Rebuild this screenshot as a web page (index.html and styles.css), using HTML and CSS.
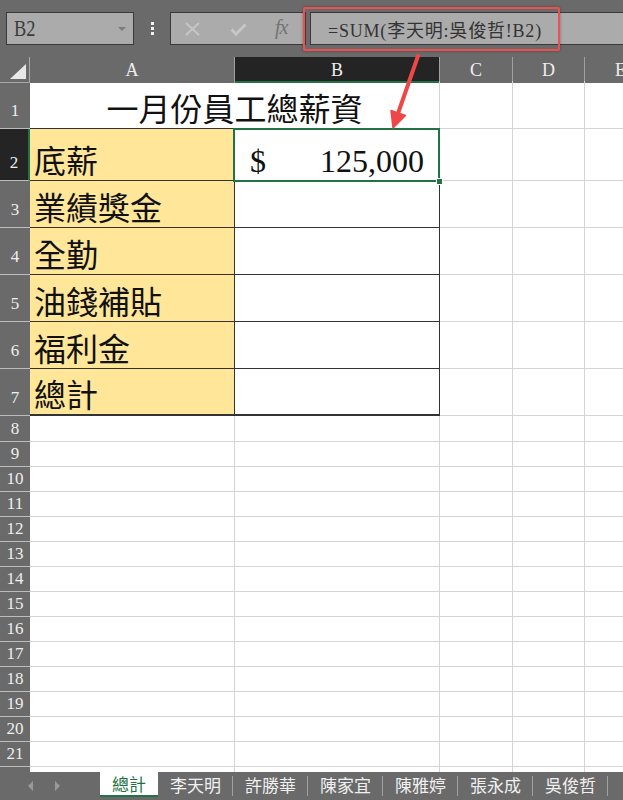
FILE: index.html
```html
<!DOCTYPE html>
<html lang="zh-Hant">
<head>
<meta charset="utf-8">
<title>一月份員工總薪資</title>
<link rel="stylesheet" href="styles.css">
</head>
<body>
<div class="app">
  <div class="toolbar">
    <div class="namebox"><span class="nb-text">B2</span><span class="nb-caret"></span></div>
    <div class="dots"><i></i><i></i><i></i></div>
    <div class="fbtns">
      <svg class="ic-x" width="15" height="14" viewBox="0 0 15 14"><path d="M1 1 L14 13 M14 1 L1 13" stroke="#c6c6c6" stroke-width="2" fill="none"/></svg>
      <svg class="ic-ok" width="17" height="13" viewBox="0 0 17 13"><path d="M1.5 6.5 L6 11 L15.5 1.5" stroke="#c6c6c6" stroke-width="3" fill="none"/></svg>
      <span class="fx">fx</span>
    </div>
    <div class="finput">=SUM(李天明:吳俊哲!B2)</div>
  </div>

  <div class="sheet">
    <div class="row hdr">
      <div class="corner"><span class="tri"></span></div>
      <div class="ch">A</div>
      <div class="ch sel">B</div>
      <div class="ch">C</div>
      <div class="ch">D</div>
      <div class="ch">E</div>
    </div>
    <div class="row r48">
      <div class="rh big">1</div>
      <div class="c title"><span>一月份員工總薪資</span></div>
      <div class="c"></div><div class="c"></div><div class="c"></div>
    </div>
    <div class="row r52">
      <div class="rh big sel">2</div>
      <div class="c lab"><span>底薪</span></div>
      <div class="c tb active"><span class="cur">$</span><span class="num">125,000</span><i class="handle"></i></div>
      <div class="c"></div><div class="c"></div><div class="c"></div>
    </div>
    <div class="row r47">
      <div class="rh big">3</div>
      <div class="c lab"><span>業績獎金</span></div>
      <div class="c tb"></div>
      <div class="c"></div><div class="c"></div><div class="c"></div>
    </div>
    <div class="row r47">
      <div class="rh big">4</div>
      <div class="c lab"><span>全勤</span></div>
      <div class="c tb"></div>
      <div class="c"></div><div class="c"></div><div class="c"></div>
    </div>
    <div class="row r47">
      <div class="rh big">5</div>
      <div class="c lab"><span>油錢補貼</span></div>
      <div class="c tb"></div>
      <div class="c"></div><div class="c"></div><div class="c"></div>
    </div>
    <div class="row r47">
      <div class="rh big">6</div>
      <div class="c lab"><span>福利金</span></div>
      <div class="c tb"></div>
      <div class="c"></div><div class="c"></div><div class="c"></div>
    </div>
    <div class="row r47">
      <div class="rh big">7</div>
      <div class="c lab last"><span>總計</span></div>
      <div class="c tb last"></div>
      <div class="c"></div><div class="c"></div><div class="c"></div>
    </div>
    <div class="row r26"><div class="rh">8</div><div class="c"></div><div class="c"></div><div class="c"></div><div class="c"></div><div class="c"></div></div>
    <div class="row r25"><div class="rh">9</div><div class="c"></div><div class="c"></div><div class="c"></div><div class="c"></div><div class="c"></div></div>
    <div class="row r25"><div class="rh">10</div><div class="c"></div><div class="c"></div><div class="c"></div><div class="c"></div><div class="c"></div></div>
    <div class="row r25"><div class="rh">11</div><div class="c"></div><div class="c"></div><div class="c"></div><div class="c"></div><div class="c"></div></div>
    <div class="row r25"><div class="rh">12</div><div class="c"></div><div class="c"></div><div class="c"></div><div class="c"></div><div class="c"></div></div>
    <div class="row r25"><div class="rh">13</div><div class="c"></div><div class="c"></div><div class="c"></div><div class="c"></div><div class="c"></div></div>
    <div class="row r25"><div class="rh">14</div><div class="c"></div><div class="c"></div><div class="c"></div><div class="c"></div><div class="c"></div></div>
    <div class="row r25"><div class="rh">15</div><div class="c"></div><div class="c"></div><div class="c"></div><div class="c"></div><div class="c"></div></div>
    <div class="row r25"><div class="rh">16</div><div class="c"></div><div class="c"></div><div class="c"></div><div class="c"></div><div class="c"></div></div>
    <div class="row r25"><div class="rh">17</div><div class="c"></div><div class="c"></div><div class="c"></div><div class="c"></div><div class="c"></div></div>
    <div class="row r25"><div class="rh">18</div><div class="c"></div><div class="c"></div><div class="c"></div><div class="c"></div><div class="c"></div></div>
    <div class="row r25"><div class="rh">19</div><div class="c"></div><div class="c"></div><div class="c"></div><div class="c"></div><div class="c"></div></div>
    <div class="row r25"><div class="rh">20</div><div class="c"></div><div class="c"></div><div class="c"></div><div class="c"></div><div class="c"></div></div>
    <div class="row r25"><div class="rh">21</div><div class="c"></div><div class="c"></div><div class="c"></div><div class="c"></div><div class="c"></div></div>
    <div class="row r25"><div class="rh"></div><div class="c"></div><div class="c"></div><div class="c"></div><div class="c"></div><div class="c"></div></div>
  </div>

  <div class="tabs">
    <div class="nav"><span class="tl"></span><span class="tr"></span></div>
    <div class="tab on">總計</div>
    <div class="tab">李天明</div>
    <div class="tab">許勝華</div>
    <div class="tab">陳家宜</div>
    <div class="tab">陳雅婷</div>
    <div class="tab">張永成</div>
    <div class="tab">吳俊哲</div>
  </div>

  <div class="callout"></div>
  <svg class="arrow" width="623" height="140" viewBox="0 0 623 140">
    <line x1="418" y1="56" x2="398.5" y2="112" stroke="#ef4747" stroke-width="4" stroke-linecap="round"/>
    <polygon points="393,128 405.5,115.5 391,110.5" fill="#ef4747" stroke="#ef4747" stroke-width="1.5" stroke-linejoin="round"/>
  </svg>
</div>
</body>
</html>
```

FILE: styles.css
```css
html, body {
  margin: 0;
  padding: 0;
}
body {
  width: 623px;
  height: 800px;
  overflow: hidden;
  background: #6a6a6a;
  font-family: "Liberation Serif", "Noto Sans CJK TC", serif;
}
.app {
  position: relative;
  width: 623px;
  height: 800px;
  overflow: hidden;
}

/* ---------- formula bar ---------- */
.toolbar {
  height: 57px;
  box-sizing: border-box;
  padding: 12px 0 0 6px;
  display: flex;
  align-items: flex-start;
  background: #6a6a6a;
}
.namebox {
  width: 128px;
  height: 33px;
  box-sizing: border-box;
  border: 1px solid #3a3a3a;
  background: #ababab;
  display: flex;
  align-items: center;
  padding-left: 7px;
}
.nb-text {
  font-family: "Liberation Serif", serif;
  font-size: 23px;
  color: #3c3c3c;
  transform: scaleX(0.8);
  transform-origin: left center;
}
.nb-caret {
  margin-left: auto;
  margin-right: 7px;
  width: 0;
  height: 0;
  border-left: 4px solid transparent;
  border-right: 4px solid transparent;
  border-top: 4px solid #7c7c7c;
}
.dots {
  width: 36px;
  height: 33px;
  display: flex;
  flex-direction: column;
  align-items: center;
  justify-content: center;
  gap: 2px;
}
.dots i {
  display: block;
  width: 3px;
  height: 3px;
  background: #f2f2f2;
}
.fbtns {
  width: 136px;
  height: 33px;
  box-sizing: border-box;
  border: 1px solid #3a3a3a;
  background: #ababab;
  display: flex;
  align-items: center;
  padding-left: 14px;
}
.ic-x { margin-top: 1px; }
.ic-ok { margin-left: 30px; margin-top: 1px; }
.fx {
  margin-left: 28px;
  font-family: "Liberation Serif", serif;
  font-style: italic;
  font-size: 20px;
  color: #737373;
  letter-spacing: -1px;
  margin-top: -2px;
}
.finput {
  margin-left: 4px;
  flex: 1;
  height: 33px;
  box-sizing: border-box;
  border: 1px solid #3a3a3a;
  border-right: none;
  background: #ababab;
  padding-left: 17px;
  display: flex;
  align-items: center;
  font-family: "Liberation Serif", "Noto Sans CJK TC", serif;
  font-size: 18px;
  letter-spacing: 0.8px;
  color: #333;
  white-space: nowrap;
}

/* ---------- sheet ---------- */
.sheet {
  height: 715px;
  overflow: hidden;
  background: #fff;
}
.row {
  display: grid;
  grid-template-columns: 30px 205px 205px 73px 72px 72px;
}
.hdr { height: 24px; }
.r48 { height: 48px; }
.r52 { height: 52px; }
.r47 { height: 47px; }
.r26 { height: 26px; }
.r25 { height: 25px; }

.corner {
  position: relative;
  background: #6a6a6a;
  border-right: 1px solid #a8a8a8;
  border-bottom: 1px solid #a8a8a8;
  box-sizing: border-box;
}
.tri {
  position: absolute;
  right: 3px;
  bottom: 3px;
  width: 0;
  height: 0;
  border-left: 16px solid transparent;
  border-bottom: 15px solid #e8e8e8;
}
.ch {
  background: #6a6a6a;
  border-right: 1px solid #a0a0a0;
  box-sizing: border-box;
  display: flex;
  align-items: center;
  justify-content: center;
  font-size: 18px;
  color: #eeeeee;
  padding-top: 1px;
}
.ch.sel {
  background: #242424;
  border-bottom: 2px solid #217346;
  padding-top: 3px;
}
.rh {
  background: #6a6a6a;
  border-bottom: 1px solid #bdbdbd;
  box-sizing: border-box;
  display: flex;
  align-items: flex-end;
  justify-content: center;
  font-size: 17px;
  line-height: 1;
  color: #eeeeee;
  padding-bottom: 4px;
}
.rh.big { padding-bottom: 9px; }
.rh.sel {
  background: #242424;
  border-right: 2px solid #217346;
}
.c {
  box-sizing: border-box;
  border-right: 1px solid #d4d4d4;
  border-bottom: 1px solid #d4d4d4;
}
.title {
  grid-column: span 2;
  border-bottom-color: #333;
  display: flex;
  align-items: flex-end;
  justify-content: center;
  padding-bottom: 5px;
  font-family: "Noto Sans CJK TC", sans-serif;
  font-size: 32px;
  line-height: 1;
  color: #111;
}
.lab {
  background: #ffe699;
  border-right-color: #333;
  border-bottom-color: #333;
  display: flex;
  align-items: flex-end;
  padding: 0 0 5px 4px;
  font-family: "Noto Sans CJK TC", sans-serif;
  font-size: 32px;
  line-height: 1;
  color: #111;
}
.tb {
  border-right-color: #333;
  border-bottom-color: #333;
}
.last { border-bottom-width: 2px; }
.active {
  position: relative;
  display: flex;
  align-items: flex-end;
  justify-content: space-between;
  padding: 0 15px 3px 15px;
  font-family: "Liberation Serif", serif;
  font-size: 32px;
  line-height: 1;
  color: #111;
}
.active::after {
  content: "";
  position: absolute;
  left: -2px;
  top: -1px;
  right: -1px;
  bottom: -2px;
  border: 2px solid #217346;
}
.handle {
  position: absolute;
  right: -4px;
  bottom: -5px;
  width: 5px;
  height: 5px;
  background: #217346;
  border: 1px solid #fff;
  z-index: 2;
}

/* ---------- sheet tabs ---------- */
.tabs {
  height: 28px;
  display: flex;
  align-items: flex-start;
  background: #6a6a6a;
  font-family: "Noto Sans CJK TC", sans-serif;
  font-size: 17px;
  color: #f0f0f0;
}
.nav {
  width: 100px;
  height: 28px;
  display: flex;
  align-items: center;
  padding-left: 28px;
  box-sizing: border-box;
  gap: 22px;
}
.nav span {
  width: 0;
  height: 0;
  border-top: 5px solid transparent;
  border-bottom: 5px solid transparent;
}
.nav .tl { border-right: 5px solid #9a9a9a; }
.nav .tr { border-left: 5px solid #9a9a9a; }
.tab {
  width: 75px;
  height: 25px;
  box-sizing: border-box;
  display: flex;
  align-items: center;
  justify-content: center;
  position: relative;
  line-height: 1;
}
.tab::after {
  content: "";
  position: absolute;
  right: 0;
  top: 4px;
  height: 20px;
  width: 1px;
  background: #a0a0a0;
}
.tab.on {
  width: 58px;
  background: #fff;
  color: #1e7145;
  border-bottom: 2px solid #217346;
}
.tab.on::after { display: none; }

/* ---------- annotation ---------- */
.callout {
  position: absolute;
  left: 303px;
  top: 7px;
  width: 257px;
  height: 44px;
  box-sizing: border-box;
  border: 2px solid #ee5050;
  border-radius: 2px;
  box-shadow: 0 0 3px rgba(0, 0, 0, 0.35);
}
.arrow {
  position: absolute;
  left: 0;
  top: 0;
}
```
